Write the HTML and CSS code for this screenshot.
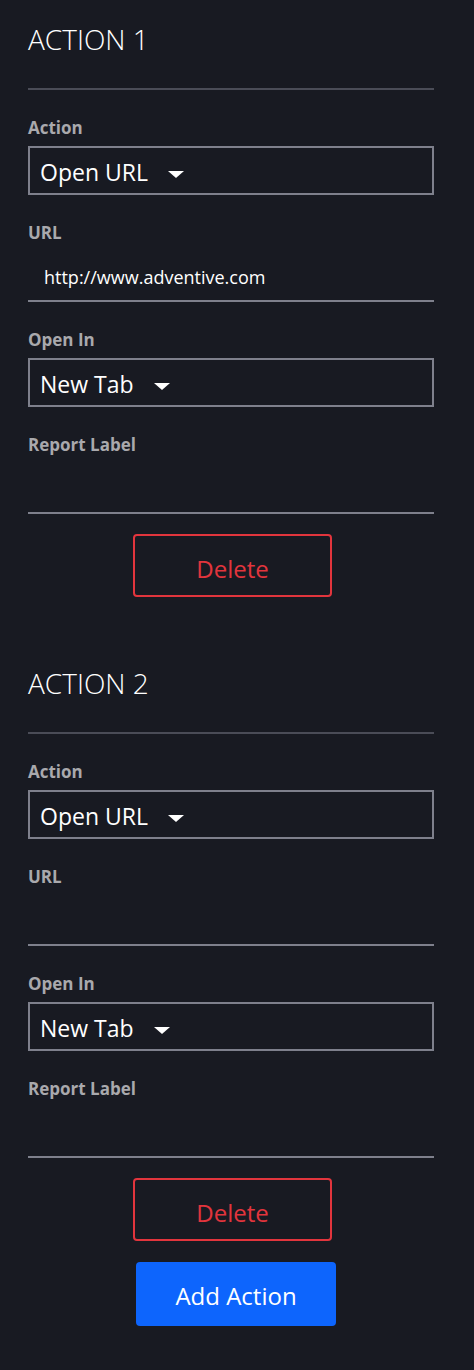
FILE: index.html
```html
<!DOCTYPE html>
<html>
<head>
    <link rel="stylesheet" href="styles.css">
    <title>Actions</title>
</head>
<body>
    <div class="action-list">
        <section class="action">
            <h2>ACTION 1</h2>
            <hr>
            <div class="fields">
                <div class="field">
                    <label>Action</label>
                    <div class="select">Open URL <span class="caret"></span></div>
                </div>
                <div class="field">
                    <label>URL</label>
                    <div class="input">http://www.adventive.com</div>
                </div>
                <div class="field">
                    <label>Open In</label>
                    <div class="select">New Tab <span class="caret"></span></div>
                </div>
                <div class="field">
                    <label>Report Label</label>
                    <div class="input"></div>
                </div>
            </div>
            <button class="btn-delete">Delete</button>
        </section>

        <section class="action">
            <h2>ACTION 2</h2>
            <hr>
            <div class="fields">
                <div class="field">
                    <label>Action</label>
                    <div class="select">Open URL <span class="caret"></span></div>
                </div>
                <div class="field">
                    <label>URL</label>
                    <div class="input"></div>
                </div>
                <div class="field">
                    <label>Open In</label>
                    <div class="select">New Tab <span class="caret"></span></div>
                </div>
                <div class="field">
                    <label>Report Label</label>
                    <div class="input"></div>
                </div>
            </div>
            <button class="btn-delete">Delete</button>
        </section>
    </div>
    <button class="btn-add">Add Action</button>
</body>
</html>
```

FILE: styles.css
```css
body {
    font-family: "Segoe UI", "Open Sans", sans-serif;
    background-color: #181a22;
    color: #ffffff;
    margin: 0;
    padding: 0 40px 44px 28px;
}

.action-list {
    display: flex;
    flex-direction: column;
    gap: 47px;
}

.action {
    display: flex;
    flex-direction: column;
    padding-top: 19px;
}

h2 {
    margin: 0;
    font-size: 28px;
    font-weight: 300;
    line-height: 40px;
}

hr {
    margin: 29px 0 0;
    border: none;
    height: 2px;
    background-color: #4a4c57;
}

.fields {
    display: flex;
    flex-direction: column;
    gap: 26px;
    margin-top: 26px;
}

.field {
    display: flex;
    flex-direction: column;
    gap: 6px;
}

label {
    font-size: 17px;
    font-weight: 700;
    line-height: 24px;
    color: #a9a9ad;
}

.select {
    height: 49px;
    box-sizing: border-box;
    border: 2px solid #7e808c;
    padding: 4px 10px 0;
    font-size: 23px;
    line-height: 41px;
}

.caret {
    display: inline-block;
    vertical-align: middle;
    margin-left: 14px;
    width: 0;
    height: 0;
    border-left: 8px solid transparent;
    border-right: 8px solid transparent;
    border-top: 7px solid #ffffff;
}

.input {
    height: 51px;
    box-sizing: border-box;
    border-bottom: 2px solid #7e808c;
    padding: 4px 16px 0;
    font-size: 18px;
    line-height: 45px;
}

button {
    font-family: inherit;
    font-size: 24px;
    cursor: pointer;
}

.btn-delete {
    align-self: flex-start;
    margin: 20px 0 0 105px;
    width: 199px;
    height: 63px;
    padding: 6px 0 0;
    line-height: 53px;
    background: none;
    border: 2px solid #e2353d;
    border-radius: 4px;
    color: #e2353d;
}

.btn-add {
    display: block;
    margin: 21px 0 0 108px;
    width: 200px;
    height: 64px;
    padding: 3px 0 0;
    line-height: 61px;
    background-color: #0d65fd;
    border: none;
    border-radius: 4px;
    color: #ffffff;
}
```
